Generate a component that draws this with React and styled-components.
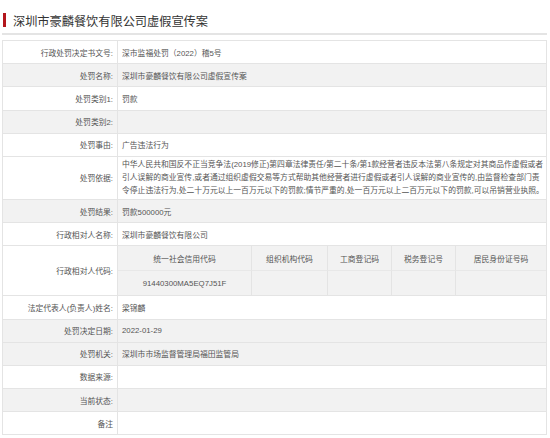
import styled, { createGlobalStyle } from 'styled-components';

const GlobalStyle = createGlobalStyle`
  html, body {
    margin: 0;
    padding: 0;
    background: #fff;
  }
  body {
    font-family: 'Liberation Sans', 'Noto Sans CJK SC', sans-serif;
  }
`;

const Page = styled.div({
  width: 545,
  padding: '0 3px 0 2px',
});

const TitleBar = styled.div({
  display: 'flex',
  alignItems: 'flex-start',
  gap: 7,
  paddingTop: 13,
  paddingBottom: 4,
  borderBottom: '2px solid #e4e4e4',
});

const Mark = styled.span({
  width: 3,
  height: 14,
  marginLeft: 1,
  background: '#b3161c',
});

const Title = styled.h1({
  margin: 0,
  paddingTop: 2,
  fontSize: 12.2,
  lineHeight: '14px',
  fontWeight: 'normal',
  color: '#333',
});

const Table = styled.div({
  marginTop: 5,
  border: '1px solid #e4e4e4',
  borderBottom: 'none',
  color: '#555',
  fontSize: 7.8,
});

const Row = styled.div`
  display: grid;
  grid-template-columns: 115px 1fr;
  min-height: 22.2px;
  border-bottom: 1px solid #e4e4e4;
  background: ${p => (p.$shade ? '#f2f2f2' : '#fff')};
`;

const Label = styled.div({
  display: 'flex',
  alignItems: 'center',
  justifyContent: 'flex-end',
  paddingRight: 4,
  borderRight: '1px solid #e4e4e4',
  whiteSpace: 'nowrap',
});

const Value = styled.div`
  display: flex;
  align-items: center;
  padding: ${p => (p.$multi ? '1.5px 2px 1.5px 4px' : '0 0 0 4px')};
  line-height: ${p => (p.$multi ? '13px' : 'normal')};
`;

const CodeGrid = styled.div({
  display: 'grid',
  gridTemplateColumns: '134px 76px 64px 64px 1fr',
  gridAutoRows: '24.5px',
  background: '#f2f2f2',
});

const CodeCell = styled.div`
  display: flex;
  align-items: center;
  justify-content: center;
  border-right: ${p => (p.$last ? 'none' : '1px solid #e4e4e4')};
  border-bottom: ${p => (p.$top ? '1px solid #e8e8e8' : 'none')};
`;

const basis = [
  '中华人民共和国反不正当竞争法(2019修正)第四章法律责任/第二十条/第1款经营者违反本法第八条规定对其商品作虚假或者',
  '引人误解的商业宣传,或者通过组织虚假交易等方式帮助其他经营者进行虚假或者引人误解的商业宣传的,由监督检查部门责',
  '令停止违法行为,处二十万元以上一百万元以下的罚款;情节严重的,处一百万元以上二百万元以下的罚款,可以吊销营业执照。',
];

const codeHeads = ['统一社会信用代码', '组织机构代码', '工商登记码', '税务登记号', '居民身份证号码'];
const codeValues = ['91440300MA5EQ7J51F', '', '', '', ''];

const rowsTop = [
  { label: '行政处罚决定书文号:', value: '深市监福处罚（2022）稽5号' },
  { label: '处罚名称:', value: '深圳市豪麟餐饮有限公司虚假宣传案', shade: true },
  { label: '处罚类别1:', value: '罚款' },
  { label: '处罚类别2:', value: '', shade: true },
  { label: '处罚事由:', value: '广告违法行为' },
];

const rowsMid = [
  { label: '处罚结果:', value: '罚款500000元', shade: true },
  { label: '行政相对人名称:', value: '深圳市豪麟餐饮有限公司' },
];

const rowsBottom = [
  { label: '法定代表人(负责人)姓名:', value: '梁锦麟' },
  { label: '处罚决定日期:', value: '2022-01-29', shade: true },
  { label: '处罚机关:', value: '深圳市市场监督管理局福田监管局', shade: true },
  { label: '数据来源:', value: '' },
  { label: '当前状态:', value: '', shade: true },
  { label: '备注', value: '' },
];

const renderRows = rows =>
  rows.map(r => (
    <Row key={r.label} $shade={r.shade}>
      <Label>{r.label}</Label>
      <Value>{r.value}</Value>
    </Row>
  ));

const App = () => (
  <Page>
    <GlobalStyle />
    <TitleBar>
      <Mark />
      <Title>深圳市豪麟餐饮有限公司虚假宣传案</Title>
    </TitleBar>
    <Table>
      {renderRows(rowsTop)}
      <Row>
        <Label>处罚依据:</Label>
        <Value $multi>
          <div>
            {basis.map(line => (
              <div key={line}>{line}</div>
            ))}
          </div>
        </Value>
      </Row>
      {renderRows(rowsMid)}
      <Row>
        <Label>行政相对人代码:</Label>
        <CodeGrid>
          {codeHeads.map((h, i) => (
            <CodeCell key={h} $top $last={i === 4}>
              {h}
            </CodeCell>
          ))}
          {codeValues.map((v, i) => (
            <CodeCell key={i} $last={i === 4}>
              {v}
            </CodeCell>
          ))}
        </CodeGrid>
      </Row>
      {renderRows(rowsBottom)}
    </Table>
  </Page>
);

export default App;
